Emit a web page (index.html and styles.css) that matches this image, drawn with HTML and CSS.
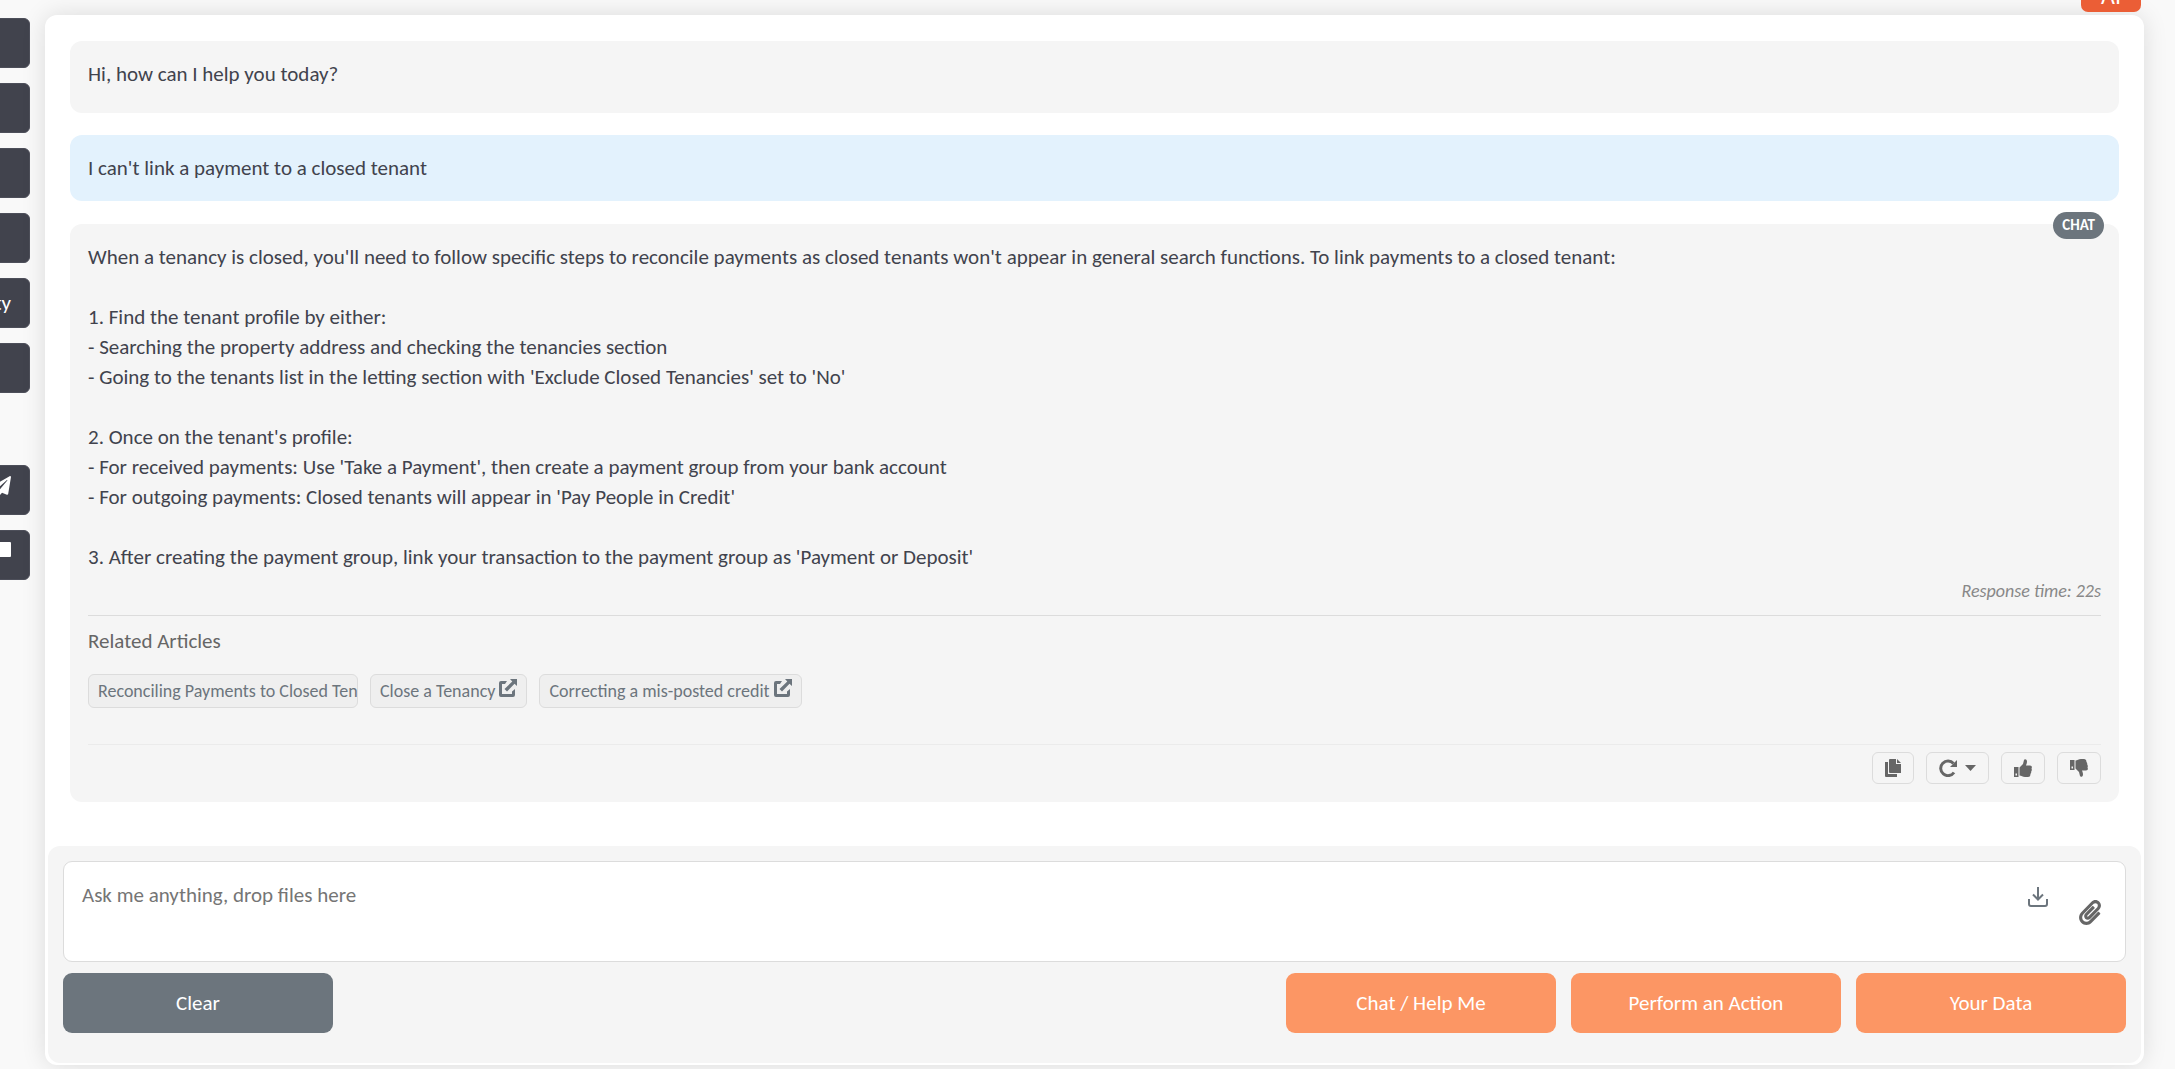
FILE: index.html
```html
<!DOCTYPE html>
<html lang="en">
<head>
<meta charset="utf-8">
<title>Assistant</title>
<link rel="stylesheet" href="styles.css">
</head>
<body>
<svg class="sprite" aria-hidden="true">
  <symbol id="share" viewBox="0 0 18 18"><path d="M8 2H2a2 2 0 0 0-2 2v12a2 2 0 0 0 2 2h12a2 2 0 0 0 2-2V10l-3 2.500V15H3V5h3zM11 0h7v7l-2.500-2.300L8 12.500 5.500 10l7.800-7.600z"/></symbol>
  <symbol id="thumb" viewBox="0 0 18 18"><path fill-rule="evenodd" d="M0 8h4.500v10H0zM1.500 14.500v2h1.500v-2zM5.500 8.500L9 5l1-4c.3-1.300 3-1.300 3 1.500 0 1.800-.7 3-1 4h4c1.600 0 2.400 1.500 1.500 3 .5 1 .4 2-.3 3 .2 1-.1 2-.8 2.500.2 2-.8 3-2.400 3h-3C8.500 18 7.500 16.500 5.500 16.500z"/></symbol>
  <symbol id="thumb-down" viewBox="0 0 18 18"><path fill-rule="evenodd" d="M0 1h4.500v10H0zM1.500 7.500v2h1.500v-2zM5.500 9.500L9 13l1 4c.3 1.300 3 1.300 3-1.500 0-1.800-.7-3-1-4h4c1.600 0 2.400-1.500 1.500-3 .5-1 .4-2-.3-3 .2-1-.1-2-.8-2.500.2-2-.8-3-2.400-3h-3C8.500 0 7.500 1.500 5.500 1.500z"/></symbol>
</svg>
<div class="page">
  <nav class="sidebar" aria-label="Main">
    <button class="nav-btn" aria-label="Dashboard"></button>
    <button class="nav-btn" aria-label="Contacts"></button>
    <button class="nav-btn" aria-label="Lettings"></button>
    <button class="nav-btn" aria-label="Accounts"></button>
    <button class="nav-btn">Property</button>
    <button class="nav-btn" aria-label="Reports"></button>
    <button class="nav-btn nav-btn-icon nav-btn-split" aria-label="Send"><svg width="20" height="20" viewBox="0 0 512 512"><path d="M476 3.200L12.500 270.600c-18.100 10.400-15.800 35.600 2.200 43.200L121 358.400l287.300-253.200c5.500-4.900 13.300 2.600 8.600 8.300L176 407v80.500c0 23.600 28.500 32.900 42.500 15.800L282 426l124.600 52.200c14.200 6 30.400-2.900 33-18.200l72-432C515 7.800 493.300-6.800 476 3.200z"/></svg></button>
    <button class="nav-btn nav-btn-icon" aria-label="Messages"><svg width="20" height="20" viewBox="0 0 20 20"><rect y="1" width="20" height="15" rx="1"/></svg></button>
  </nav>
  <main class="chat">
    <button class="ai-tab">AI</button>
    <div class="messages">
      <p class="message greeting">Hi, how can I help you today?</p>
      <p class="message message-user">I can't link a payment to a closed tenant</p>
      <article class="message answer">
        <span class="badge">CHAT</span>
        <div class="answer-text">When a tenancy is closed, you'll need to follow specific steps to reconcile payments as closed tenants won't appear in general search functions. To link payments to a closed tenant:

1. Find the tenant profile by either:
- Searching the property address and checking the tenancies section
- Going to the tenants list in the letting section with 'Exclude Closed Tenancies' set to 'No'

2. Once on the tenant's profile:
- For received payments: Use 'Take a Payment', then create a payment group from your bank account
- For outgoing payments: Closed tenants will appear in 'Pay People in Credit'

3. After creating the payment group, link your transaction to the payment group as 'Payment or Deposit'</div>
        <div class="response-time">Response time: 22s</div>
        <section class="related">
          <h2 class="related-title">Related Articles</h2>
          <div class="related-list">
            <a class="article article-clipped" href="#">Reconciling Payments to Closed Tenants</a>
            <a class="article" href="#">Close a Tenancy <svg width="18" height="18"><use href="#share"/></svg></a>
            <a class="article" href="#">Correcting a mis-posted credit <svg width="18" height="18"><use href="#share"/></svg></a>
          </div>
        </section>
        <div class="actions">
          <button class="tool" aria-label="Copy"><svg width="16" height="18" viewBox="0 0 16 18"><path d="M0 3h3v12h9v3H1a1 1 0 0 1-1-1zM4 1a1 1 0 0 1 1-1h6v5h5v9H5a1 1 0 0 1-1-1zM12 0l4 4h-4z"/></svg></button>
          <button class="tool" aria-label="Retry"><svg width="18" height="18" viewBox="0 0 18 18"><path d="M15 13.500A7.300 7.300 0 1 1 14.500 4.500" fill="none" stroke="currentColor" stroke-width="3"/><path d="M18 1v7h-7z"/></svg><svg width="11" height="6" viewBox="0 0 11 6"><path d="M0 0h11L5.500 6z"/></svg></button>
          <button class="tool" aria-label="Helpful"><svg width="18" height="18"><use href="#thumb"/></svg></button>
          <button class="tool" aria-label="Not helpful"><svg width="18" height="18"><use href="#thumb-down"/></svg></button>
        </div>
      </article>
    </div>
    <form class="composer">
      <div class="prompt">
        <textarea class="prompt-input" aria-label="Message" placeholder="Ask me anything, drop files here"></textarea>
        <div class="prompt-tools">
          <button class="prompt-btn" type="button" aria-label="Download"><svg width="20" height="20" viewBox="0 0 20 20"><path fill="none" stroke="currentColor" stroke-width="2" d="M10 0V12M5 7.500l5 5 5-5M1 12v5a2 2 0 0 0 2 2h14a2 2 0 0 0 2-2v-5"/></svg></button>
          <button class="prompt-btn prompt-attach" type="button" aria-label="Attach file"><svg width="22" height="25" viewBox="0 0 448 512"><path d="M43.246 466.142c-58.430-60.289-57.341-157.511 1.386-217.581L254.392 34c44.316-45.332 116.351-45.336 160.671 0 43.890 44.894 43.943 117.329 0 162.276L232.214 383.128c-29.855 30.537-78.633 30.111-107.982-.998-28.275-29.970-27.368-77.473 1.452-106.953l143.743-146.835c6.182-6.314 16.312-6.422 22.626-.241l22.861 22.379c6.315 6.182 6.422 16.312.241 22.626L171.427 319.927c-4.932 5.045-5.236 13.428-.648 18.292 4.372 4.634 11.245 4.711 15.688.165l182.849-186.851c19.613-20.062 19.613-52.725-.011-72.798-19.189-19.627-49.957-19.637-69.154 0L90.390 293.295c-34.763 35.560-35.299 93.120-1.191 128.313 34.010 35.093 88.985 35.137 123.058.286l172.060-175.999c6.177-6.319 16.307-6.433 22.626-.256l22.877 22.364c6.319 6.177 6.434 16.307.256 22.626l-172.060 175.998c-59.576 60.938-155.943 60.216-214.770-.485z"/></svg></button>
        </div>
      </div>
      <div class="composer-row">
        <button class="btn btn-clear" type="button">Clear</button>
        <button class="btn" type="button">Chat / Help Me</button>
        <button class="btn" type="button">Perform an Action</button>
        <button class="btn" type="button">Your Data</button>
      </div>
    </form>
  </main>
</div>
</body>
</html>
```
FILE: styles.css
```css
* { box-sizing: border-box; }

body {
  margin: 0;
  background: #f9f9f9;
  color: #41434d;
  font: 21px/30px Calibri, Carlito, Lato, sans-serif;
}

button, textarea { font: inherit; }
button { cursor: pointer; }
svg { fill: currentColor; }
.sprite { display: none; }

.page {
  display: flex;
  gap: 15px;
  min-height: 100vh;
  padding: 15px 31px 4px 0;
}

/* Sidebar, collapsed so only the right edge of each button shows */
.sidebar {
  flex: none;
  display: flex;
  flex-direction: column;
  align-items: flex-end;
  gap: 15px;
  width: 30px;
  padding-top: 3px;
  overflow: hidden;
}

.nav-btn {
  flex: none;
  width: 210px;
  height: 50px;
  padding: 0 18px;
  border: 1px solid #4d4f5a;
  border-radius: 6px;
  background: #41434d;
  color: #fff;
  text-align: right;
}

.nav-btn-icon {
  display: flex;
  justify-content: flex-end;
  padding-top: 10px;
}

.nav-btn-split { margin-top: 57px; }

/* Chat card */
.chat {
  position: relative;
  flex: 1;
  min-width: 0;
  display: flex;
  flex-direction: column;
  padding: 0 3px 2px;
  border-radius: 12px;
  background: #fff;
  box-shadow: 0 0 24px rgba(0, 0, 0, .12);
}

.ai-tab {
  position: absolute;
  right: 3px;
  bottom: calc(100% + 3px);
  width: 60px;
  height: 32px;
  padding: 0;
  border: 0;
  border-radius: 7px;
  background: #eb5e36;
  color: #fff;
  font-size: 24px;
}

.messages {
  flex: 1;
  display: flex;
  flex-direction: column;
  gap: 22px;
  padding: 26px 22px 44px;
}

.message {
  margin: 0;
  padding: 18px;
  border-radius: 12px;
  background: #f5f5f5;
}

.greeting { padding-bottom: 24px; }
.message-user { background: #e3f2fd; }

.answer {
  position: relative;
  margin-top: 1px;
}

.badge {
  position: absolute;
  top: -12px;
  right: 15px;
  padding: 0 9px;
  border-radius: 14px;
  background: #6c757d;
  color: #fff;
  font-size: 15px;
  font-weight: 700;
  line-height: 27px;
}

.answer-text { white-space: pre-line; }

.response-time {
  padding: 4px 0 9px;
  color: #888;
  font-size: 18px;
  font-style: italic;
  text-align: right;
}

.related {
  padding: 10px 0 36px;
  border-top: 1px solid #dcdcdc;
}

.related-title {
  margin: 0 0 18px;
  color: #666;
  font-size: 21px;
  font-weight: 400;
}

.related-list {
  display: flex;
  gap: 12px;
}

.article {
  padding: 0 9px;
  border: 1px solid #dcdcdc;
  border-radius: 6px;
  background: #efefef;
  color: #6c757d;
  font-size: 18px;
  line-height: 32px;
  text-decoration: none;
  white-space: nowrap;
}

.article-clipped {
  width: 270px;
  padding-right: 0;
  overflow: hidden;
}

.actions {
  display: flex;
  justify-content: flex-end;
  gap: 12px;
  padding-top: 7px;
  border-top: 1px solid #ebebeb;
}

.tool {
  display: flex;
  align-items: center;
  gap: 8px;
  height: 32px;
  padding: 0 12px;
  border: 1px solid #dcdcdc;
  border-radius: 6px;
  background: none;
  color: #666;
}

/* Composer */
.composer {
  padding: 15px 15px 30px;
  border-radius: 12px;
  background: #f5f5f5;
}

.prompt {
  display: flex;
  margin-bottom: 11px;
  border: 1px solid #dcdcdc;
  border-radius: 9px;
  background: #fff;
}

.prompt-input {
  flex: 1;
  height: 99px;
  padding: 18px;
  border: 0;
  outline: 0;
  background: none;
  color: #41434d;
  resize: none;
}

.prompt-input::placeholder { color: #757575; }

.prompt-tools {
  display: flex;
  align-items: flex-start;
  gap: 31px;
  padding: 25px 24px 0 0;
}

.prompt-btn {
  display: flex;
  padding: 0;
  border: 0;
  background: none;
  color: #6c757d;
}

.prompt-attach {
  margin-top: 13px;
  color: #666;
}

.composer-row {
  display: flex;
  gap: 15px;
}

.btn {
  width: 270px;
  height: 60px;
  border: 0;
  border-radius: 9px;
  background: #fc9664;
  color: #fff;
}

.btn-clear {
  margin-right: auto;
  background: #6c757d;
}
```
